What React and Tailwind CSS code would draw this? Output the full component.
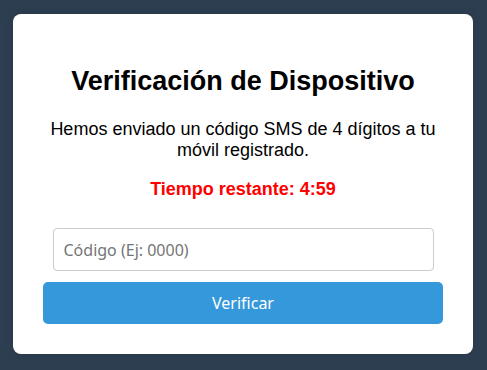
import React, { useState } from 'react';

export default function App() {
  const [code, setCode] = useState('');

  return (
    <div className="min-h-screen w-full bg-[#2c3e50] pl-[13px] pt-[14px]">
      <div className="w-[460px] rounded-[8px] bg-white px-[30px] pb-[30px] pt-[30px] text-center shadow-[0_0_10px_rgba(0,0,0,0.1)] font-['Liberation_Sans',Arial,sans-serif] text-black">
        <h2 className="mt-[22px] text-[27px] font-bold leading-[30px]">
          Verificación de Dispositivo
        </h2>
        <p className="mt-[23px] text-[18px] leading-[21px]">
          Hemos enviado un código SMS de 4 dígitos a tu móvil registrado.
        </p>
        <p className="mt-[18px] text-[18px] font-bold leading-[21px] text-[#ff0000]">
          Tiempo restante: 4:59
        </p>
        <input
          type="text"
          value={code}
          onChange={(e) => setCode(e.target.value)}
          placeholder="Código (Ej: 0000)"
          className="mx-auto mt-[28px] block h-[43px] w-[381px] rounded-[4px] border border-[#cccccc] px-[10px] text-[16px] font-['Noto_Sans',sans-serif] text-black placeholder:text-[#757575] outline-none"
        />
        <button className="mt-[11px] block h-[42px] w-full rounded-[5px] bg-[#3498db] text-[16px] text-white font-['Noto_Sans',sans-serif]">
          Verificar
        </button>
      </div>
    </div>
  );
}
